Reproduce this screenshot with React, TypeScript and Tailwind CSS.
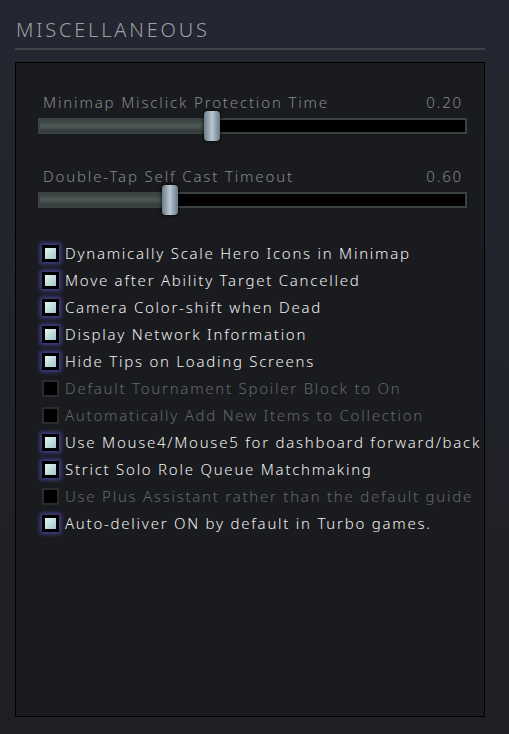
import React from "react";

const options = [
  { label: "Dynamically Scale Hero Icons in Minimap", on: true },
  { label: "Move after Ability Target Cancelled", on: true },
  { label: "Camera Color-shift when Dead", on: true },
  { label: "Display Network Information", on: true },
  { label: "Hide Tips on Loading Screens", on: true },
  { label: "Default Tournament Spoiler Block to On", on: false },
  { label: "Automatically Add New Items to Collection", on: false },
  { label: "Use Mouse4/Mouse5 for dashboard forward/back", on: true },
  { label: "Strict Solo Role Queue Matchmaking", on: true },
  { label: "Use Plus Assistant rather than the default guide", on: false },
  { label: "Auto-deliver ON by default in Turbo games.", on: true },
];

const Slider = ({ label, value, pct }: { label: string; value: string; pct: number }) => (
  <div className="flex flex-col">
    <div className="flex justify-between pl-[5px] pr-[4px] text-[15px] font-light leading-[18px] tracking-[1.85px] text-[#858a8b]">
      <span>{label}</span>
      <span>{value}</span>
    </div>
    <div className="relative mt-[7px] h-[16px] border-2 border-[#3b4342] bg-black">
      <div
        className="h-full bg-gradient-to-b from-[#3a4241] via-[#4d5857] to-[#323938]"
        style={{ width: `${pct}%` }}
      />
      <div
        className="absolute top-[-9px] h-[30px] w-[16px] -translate-x-1/2 rounded-[4px] bg-gradient-to-r from-[#6d7d89] via-[#b9c7d2] to-[#6a7a86] shadow-[0_0_4px_rgba(0,0,0,0.9)]"
        style={{ left: `${pct}%` }}
      />
    </div>
  </div>
);

export default function App() {
  return (
    <div
      className="h-[734px] w-[509px] bg-gradient-to-b from-[#242631] to-[#1e1f23] px-[15px] pt-[18px]"
      style={{ fontFamily: '"Noto Sans", sans-serif' }}
    >
      <h1 className="pl-[1px] text-[20px] font-light leading-[24px] tracking-[2.8px] text-[#9ba0a6]">
        MISCELLANEOUS
      </h1>
      <div className="mt-[6px] h-[2px] w-[470px] bg-[#404148]" />
      <div className="mt-[12px] h-[655px] w-[470px] border border-black bg-[#1a1b1e] pl-[22px] pr-[17px] pt-[30px]">
        <div className="flex flex-col gap-[33px]">
          <Slider label="Minimap Misclick Protection Time" value="0.20" pct={40.4} />
          <Slider label="Double-Tap Self Cast Timeout" value="0.60" pct={30.5} />
        </div>
        <div className="mt-[36px] -mr-[12px] flex flex-col gap-[9px] pl-[4px]">
          {options.map((o) => (
            <div key={o.label} className="flex h-[18px] items-center gap-[6px]">
              {o.on ? (
                <div className="flex h-[17px] w-[17px] shrink-0 items-center justify-center bg-black shadow-[0_0_4px_2px_rgba(95,90,215,0.6)]">
                  <div className="h-[11px] w-[11px] bg-gradient-to-br from-[#e4f4f4] to-[#9fc9c9]" />
                </div>
              ) : (
                <div className="h-[17px] w-[17px] shrink-0 border-2 border-[#2a2c2e] bg-black" />
              )}
              <span
                className={`whitespace-nowrap text-[15px] font-light leading-[18px] tracking-[1.75px] ${
                  o.on ? "text-[#f0f0f0]" : "text-[#64696b]"
                }`}
              >
                {o.label}
              </span>
            </div>
          ))}
        </div>
      </div>
    </div>
  );
}
